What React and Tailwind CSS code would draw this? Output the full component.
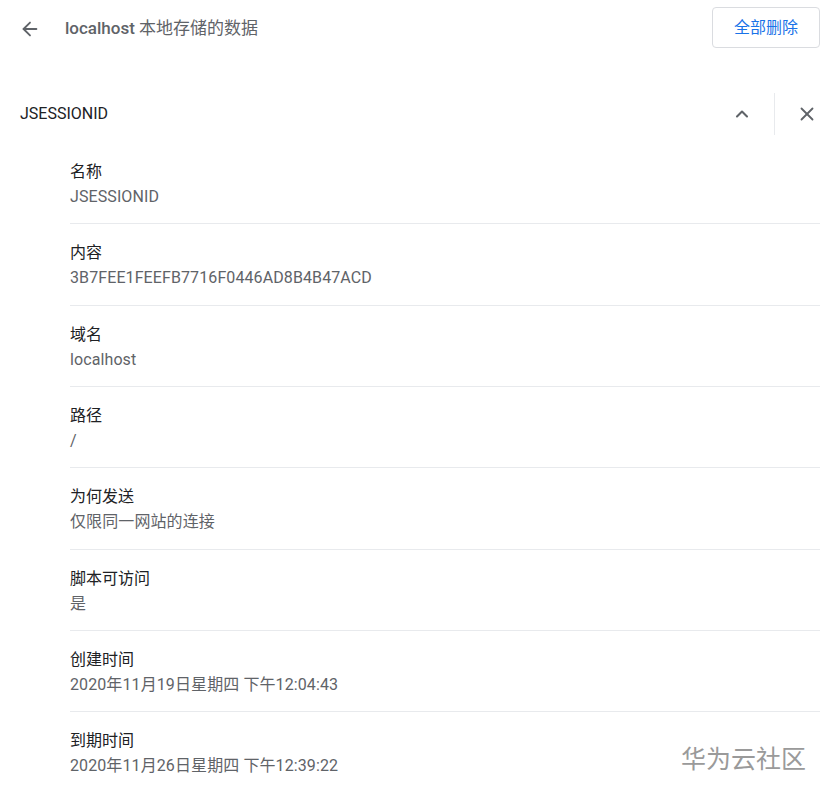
import { ArrowLeft, ChevronUp, X } from "lucide-react";

const rows = [
  { label: "名称", value: "JSESSIONID" },
  { label: "内容", value: "3B7FEE1FEEFB7716F0446AD8B4B47ACD" },
  { label: "域名", value: "localhost" },
  { label: "路径", value: "/" },
  { label: "为何发送", value: "仅限同一网站的连接" },
  { label: "脚本可访问", value: "是" },
  { label: "创建时间", value: "2020年11月19日星期四 下午12:04:43" },
  { label: "到期时间", value: "2020年11月26日星期四 下午12:39:22" },
];

export default function App() {
  return (
    <div className="relative w-[828px] h-[797px] overflow-hidden bg-white font-['Roboto','Noto_Sans_CJK_SC',sans-serif]">
      {/* Top bar */}
      <div className="flex items-center h-[56px] pl-[18px] pr-[8px]">
        <button className="mt-[2px] w-[24px] h-[24px] flex items-center justify-center text-[#5f6368]">
          <ArrowLeft className="w-[22px] h-[22px]" strokeWidth={2} />
        </button>
        <h1 className="ml-[23px] mt-[2px] text-[17px] text-[#5f6368]">
          <span className="font-medium">localhost</span> 本地存储的数据
        </h1>
        <button className="ml-auto w-[108px] h-[41px] mt-[-1px] rounded-[4px] border border-[#dadce0] text-[16px] text-[#1a73e8]">
          全部删除
        </button>
      </div>

      {/* Cookie header */}
      <div className="flex items-center h-[42px] mt-[37px] pl-[20px]">
        <span className="text-[16px] text-[#202124]">JSESSIONID</span>
        <button className="ml-auto w-[40px] h-[40px] flex items-center justify-center text-[#5f6368]">
          <ChevronUp className="w-[20px] h-[20px]" strokeWidth={2.5} />
        </button>
        <div className="ml-[12px] w-px h-[42px] bg-[#e8eaed]" />
        <button className="ml-[12px] mr-[1px] w-[40px] h-[40px] flex items-center justify-center text-[#5f6368]">
          <X className="w-[22px] h-[22px]" strokeWidth={2} />
        </button>
      </div>

      {/* Details */}
      <div className="mt-[8px] ml-[70px] mr-[8px]">
        {rows.map((r, i) => (
          <div
            key={r.label}
            className={
              "pt-[19px] pb-[16.33px] " +
              (i < rows.length - 1 ? "border-b border-[#e8eaed]" : "")
            }
          >
            <div className="text-[16px] leading-[20px] text-[#202124]">{r.label}</div>
            <div className="mt-[5px] text-[16px] leading-[20px] tracking-[0.1px] text-[#5f6368]">{r.value}</div>
          </div>
        ))}
      </div>

      {/* Watermark */}
      <div className="absolute left-[681px] top-[742px] text-[25px] leading-[30px] text-[#9a9a9a] font-['Noto_Sans_CJK_SC',sans-serif]">
        华为云社区
      </div>
    </div>
  );
}
